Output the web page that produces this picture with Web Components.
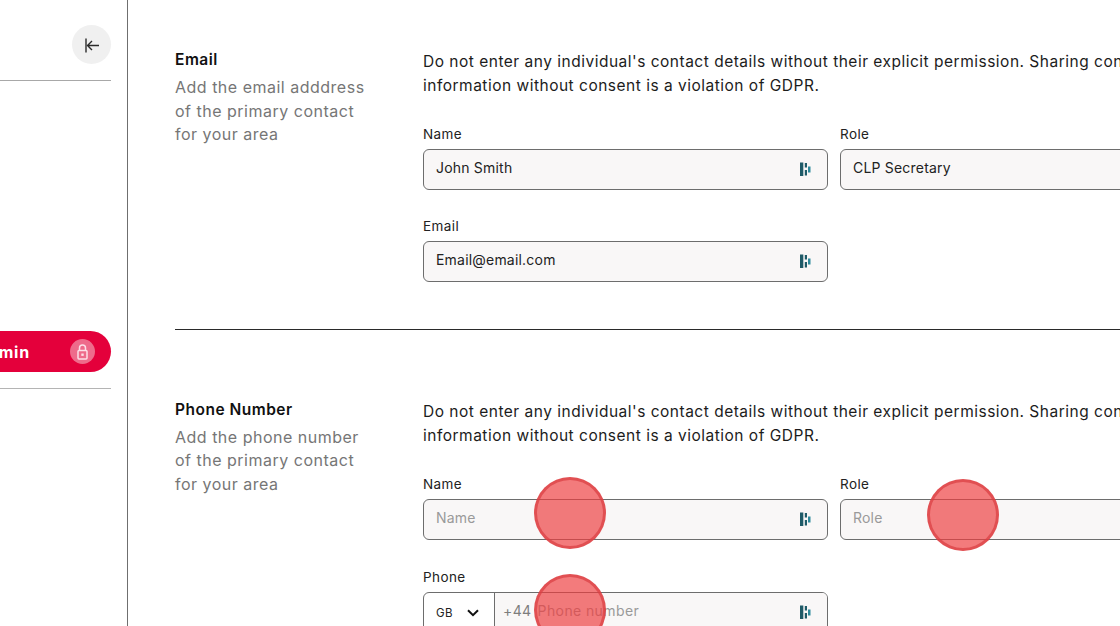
<!DOCTYPE html>
<html lang="en">
<head>
<meta charset="utf-8">
<title>Contact settings</title>
<style>
    html, body { margin: 0; height: 100%; overflow: hidden; background: #fff; }
    body { font-family: "Inter", "Open Sans", sans-serif; color: #1c1c1c; }
    #page { display: flex; width: 1120px; height: 626px; overflow: hidden; position: relative; }
</style>
</head>
<body>
<div id="page">
    <side-bar></side-bar>
    <main-panel>
        <form-section title="Email" desc="Add the email adddress of the primary contact for your area">
            <form-field label="Name" value="John Smith"></form-field>
            <form-field label="Role" value="CLP Secretary"></form-field>
            <form-field label="Email" value="Email@email.com"></form-field>
        </form-section>
        <section-rule></section-rule>
        <form-section style="--row-gap: 29px" title="Phone Number" desc="Add the phone number of the primary contact for your area">
            <form-field label="Name" placeholder="Name"></form-field>
            <form-field label="Role" placeholder="Role"></form-field>
            <phone-field label="Phone" placeholder="Phone number"></phone-field>
        </form-section>
    </main-panel>
    <click-dot style="left:534px;top:477px"></click-dot>
    <click-dot style="left:927px;top:479px"></click-dot>
    <click-dot style="left:534px;top:574px"></click-dot>
</div>

<script>
const FILL_ICON = `
    <svg width="11" height="15" viewBox="0 0 11 15" fill="#1f5b68">
        <rect x="0" y="0.5" width="3.3" height="13.5"/>
        <rect x="4.800" y="1" width="2.200" height="4.500"/>
        <rect x="4.800" y="8" width="2.200" height="5.500"/>
        <rect x="8" y="4.500" width="2.500" height="6" fill="#2f8a9c"/>
    </svg>`;

class SideBar extends HTMLElement {
    connectedCallback() {
        const shadow = this.attachShadow({ mode: "open" });
        shadow.innerHTML = `
            <style>
                :host {
                    display: block;
                    flex: none;
                    width: 300px;
                    margin-left: -172px;
                    box-sizing: border-box;
                    border-right: 1px solid #6f6f6f;
                    padding: 25px 16px 0 0;
                }
                .top {
                    display: flex;
                    justify-content: flex-end;
                    padding-bottom: 16px;
                    border-bottom: 1px solid #a8a8a8;
                }
                .toggle {
                    width: 39px;
                    height: 39px;
                    border-radius: 50%;
                    background: #f0f0f0;
                    display: flex;
                    align-items: center;
                    justify-content: center;
                }
                .admin {
                    margin-top: 250px;
                    height: 41px;
                    border-radius: 0 21px 21px 0;
                    background: #e4003b;
                    color: #fff;
                    font-size: 16px;
                    font-weight: 700;
                    letter-spacing: 0.8px;
                    display: flex;
                    align-items: center;
                    justify-content: flex-end;
                    gap: 40px;
                    padding-right: 16px;
                }
                .lock {
                    width: 25px;
                    height: 25px;
                    border-radius: 50%;
                    background: #ee6b8b;
                    display: flex;
                    align-items: center;
                    justify-content: center;
                }
                .rule {
                    margin-top: 16px;
                    border-bottom: 1px solid #b4b4b4;
                }
            </style>
            <div class="top">
                <div class="toggle">
                    <svg width="16" height="16" viewBox="0 0 16 16" fill="none" stroke="#2a2a2a" stroke-width="1.400">
                        <path d="M2 1.500v14"/>
                        <path d="M15 8.500H3.500M8 4 3.500 8.500 8 13"/>
                    </svg>
                </div>
            </div>
            <div class="admin">
                <span>Admin</span>
                <span class="lock">
                    <svg width="15" height="17" viewBox="0 0 15 17" fill="none" stroke="#fde0e8" stroke-width="1.500">
                        <rect x="3" y="7.500" width="9" height="8.500" rx="1"/>
                        <path d="M4.500 7.500V5a3 3 0 0 1 6 0v2.500"/>
                        <rect x="6.300" y="10.500" width="2.400" height="2.400" fill="#fde0e8" stroke="none"/>
                    </svg>
                </span>
            </div>
            <div class="rule"></div>
        `;
    }
}

class MainPanel extends HTMLElement {
    connectedCallback() {
        const shadow = this.attachShadow({ mode: "open" });
        shadow.innerHTML = `
            <style>
                :host {
                    display: block;
                    flex: none;
                    width: 1118px;
                    box-sizing: border-box;
                    padding: 50px 0 0 47px;
                }
            </style>
            <slot></slot>
        `;
    }
}

class FormSection extends HTMLElement {
    connectedCallback() {
        const shadow = this.attachShadow({ mode: "open" });
        const title = this.getAttribute("title");
        const desc = this.getAttribute("desc");
        shadow.innerHTML = `
            <style>
                :host {
                    display: grid;
                    grid-template-columns: 248px 822px;
                }
                h3 {
                    margin: 0;
                    font-size: 15.500px;
                    line-height: 20px;
                    letter-spacing: 0.500px;
                    font-weight: 600;
                    color: #111;
                }
                .desc {
                    margin: 6px 0 0;
                    width: 195px;
                    font-size: 16px;
                    line-height: 23.500px;
                    letter-spacing: 0.500px;
                    color: #767676;
                }
                .note {
                    margin: 0;
                    font-size: 15.500px;
                    line-height: 24px;
                    letter-spacing: 0.500px;
                    white-space: nowrap;
                    color: #1c1c1c;
                }
                .fields {
                    display: grid;
                    grid-template-columns: 405px 405px;
                    column-gap: 12px;
                    row-gap: var(--row-gap, 28px);
                    margin-top: 27.700px;
                }
            </style>
            <div>
                <h3>${title}</h3>
                <p class="desc">${desc}</p>
            </div>
            <div>
                <p class="note">Do not enter any individual's contact details without their explicit permission. Sharing contact<br>information without consent is a violation of GDPR.</p>
                <div class="fields"><slot></slot></div>
            </div>
        `;
    }
}

class FormField extends HTMLElement {
    connectedCallback() {
        const shadow = this.attachShadow({ mode: "open" });
        const value = this.getAttribute("value");
        const text = value || this.getAttribute("placeholder");
        shadow.innerHTML = `
            <style>
                :host { display: block; }
                label {
                    display: block;
                    font-size: 13.500px;
                    line-height: 17px;
                    letter-spacing: 0.400px;
                    margin-bottom: 6px;
                    color: #222;
                }
                .box {
                    box-sizing: border-box;
                    height: 41px;
                    border: 1px solid #6d6d6d;
                    border-radius: 6px;
                    background: #f9f7f7;
                    display: flex;
                    align-items: center;
                    justify-content: space-between;
                    padding: 0 16px 0 12px;
                    font-size: 14px;
                    letter-spacing: 0.200px;
                    color: ${value ? "#222" : "#9a9a9a"};
                }
                .box span { margin-bottom: 3px; }
                svg { display: block; }
            </style>
            <label>${this.getAttribute("label")}</label>
            <div class="box">
                <span>${text}</span>
                ${FILL_ICON}
            </div>
        `;
    }
}

class PhoneField extends HTMLElement {
    connectedCallback() {
        const shadow = this.attachShadow({ mode: "open" });
        shadow.innerHTML = `
            <style>
                :host { display: block; }
                label {
                    display: block;
                    font-size: 13.500px;
                    line-height: 17px;
                    letter-spacing: 0.400px;
                    margin-bottom: 6px;
                    color: #222;
                }
                .box {
                    box-sizing: border-box;
                    height: 41px;
                    border: 1px solid #6d6d6d;
                    border-radius: 6px;
                    background: #fff;
                    display: flex;
                    align-items: stretch;
                    font-size: 14px;
                    letter-spacing: 0.400px;
                }
                .country {
                    flex: none;
                    width: 71px;
                    box-sizing: border-box;
                    border-right: 1px solid #6d6d6d;
                    display: flex;
                    align-items: center;
                    gap: 14px;
                    padding: 2px 0 0 12px;
                    font-size: 11.500px;
                    color: #222;
                }
                .num {
                    flex: 1;
                    display: flex;
                    align-items: center;
                    justify-content: space-between;
                    padding: 0 16px 0 8px;
                    background: #f9f7f7;
                    border-radius: 0 5px 5px 0;
                    color: #9a9a9a;
                }
                .num > span { margin-bottom: 3px; }
                .prefix { color: #7d7d7d; margin-right: 6px; }
                svg { display: block; }
            </style>
            <label>${this.getAttribute("label")}</label>
            <div class="box">
                <div class="country">
                    <span>GB</span>
                    <svg width="12" height="8" viewBox="0 0 12 8" fill="none" stroke="#111" stroke-width="2">
                        <path d="M1 1.200 6 6.200l5-5"/>
                    </svg>
                </div>
                <div class="num">
                    <span><span class="prefix">+44</span>${this.getAttribute("placeholder")}</span>
                    ${FILL_ICON}
                </div>
            </div>
        `;
    }
}

class SectionRule extends HTMLElement {
    connectedCallback() {
        const shadow = this.attachShadow({ mode: "open" });
        shadow.innerHTML = `
            <style>
                :host {
                    display: block;
                    margin: 47px 0 70.300px;
                    border-top: 1px solid #2a2a2a;
                }
            </style>
        `;
    }
}

// click markers from the screen recording, they sit on top of the form
class ClickDot extends HTMLElement {
    connectedCallback() {
        const shadow = this.attachShadow({ mode: "open" });
        shadow.innerHTML = `
            <style>
                :host {
                    position: absolute;
                    width: 72px;
                    height: 72px;
                    box-sizing: border-box;
                    border-radius: 50%;
                    background: rgba(238, 60, 62, 0.68);
                    border: 3px solid rgba(218, 62, 66, 0.72);
                }
            </style>
        `;
    }
}

customElements.define("side-bar", SideBar);
customElements.define("main-panel", MainPanel);
customElements.define("form-section", FormSection);
customElements.define("form-field", FormField);
customElements.define("phone-field", PhoneField);
customElements.define("section-rule", SectionRule);
customElements.define("click-dot", ClickDot);
</script>
</body>
</html>
